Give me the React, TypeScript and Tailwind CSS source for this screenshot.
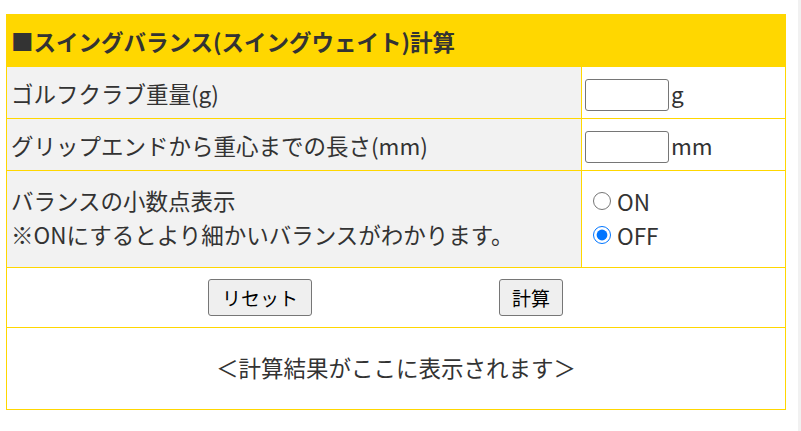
import React from "react";

const font = { fontFamily: '"Noto Sans CJK JP", "Noto Sans", sans-serif' };

export default function App() {
  return (
    <div className="flex w-[801px] h-[431px] bg-white text-[#333]" style={font}>
      <div className="flex-1">
        <div className="mt-[14px] ml-[6px] w-[780px] border border-[#ffd700] text-[22.5px] leading-[34px]">
          <div className="h-[51px] bg-[#ffd700] flex items-center pl-[4px] font-bold">
            ■スイングバランス(スイングウェイト)計算
          </div>
          <div className="flex h-[52px] border-t border-[#ffd700]">
            <div className="w-[574px] bg-[#f2f2f2] flex items-center pl-[4px] pt-[1px]">
              ゴルフクラブ重量(g)
            </div>
            <div className="flex-1 border-l border-[#ffd700] flex items-center pl-[3px]">
              <input
                type="text"
                className="w-[84px] h-[32px] mt-[5px] border border-[#767676] rounded-[3px] bg-white outline-none"
              />
              <span className="ml-[2px]">g</span>
            </div>
          </div>
          <div className="flex h-[52px] border-t border-[#ffd700]">
            <div className="w-[574px] bg-[#f2f2f2] flex items-center pl-[4px]">
              グリップエンドから重心までの長さ(mm)
            </div>
            <div className="flex-1 border-l border-[#ffd700] flex items-center pl-[3px]">
              <input
                type="text"
                className="w-[84px] h-[32px] mt-[5px] border border-[#767676] rounded-[3px] bg-white outline-none"
              />
              <span className="ml-[2px]">mm</span>
            </div>
          </div>
          <div className="flex h-[97px] border-t border-[#ffd700]">
            <div className="w-[574px] bg-[#f2f2f2] flex flex-col justify-center pl-[4px] pb-[4px]">
              <div>バランスの小数点表示</div>
              <div>※ONにするとより細かいバランスがわかります。</div>
            </div>
            <div className="flex-1 border-l border-[#ffd700] flex flex-col justify-center pl-[11px] pb-[2px]">
              <label className="flex items-center">
                <input type="radio" name="dec" className="w-[18px] h-[18px] m-0" />
                <span className="ml-[6px]">ON</span>
              </label>
              <label className="flex items-center">
                <input type="radio" name="dec" defaultChecked className="w-[18px] h-[18px] m-0" />
                <span className="ml-[6px]">OFF</span>
              </label>
            </div>
          </div>
          <div className="flex items-center h-[60px] border-t border-[#ffd700] pl-[201px]">
            <button className="w-[104px] h-[37px] bg-[#efefef] border border-[#767676] rounded-[3px] text-[19px] text-black">
              リセット
            </button>
            <button className="ml-[187px] w-[64px] h-[37px] bg-[#efefef] border border-[#767676] rounded-[3px] text-[19px] text-black">
              計算
            </button>
          </div>
          <div className="flex items-center justify-center h-[82px] border-t border-[#ffd700] pb-[4px]">
            ＜計算結果がここに表示されます＞
          </div>
        </div>
      </div>
      <div className="w-[3px] h-[431px] bg-[#f1f1f1]" />
    </div>
  );
}
